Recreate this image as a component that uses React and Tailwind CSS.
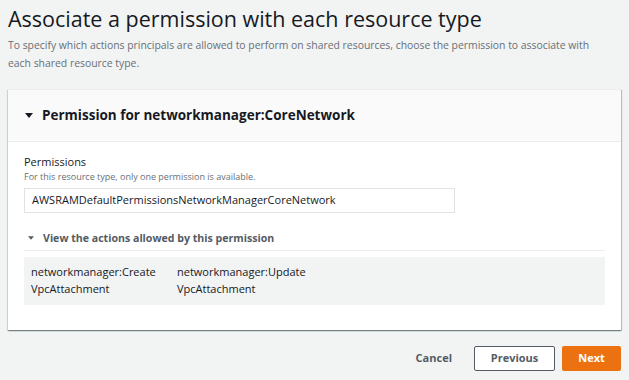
import React from 'react';

const font = { fontFamily: '"Open Sans", "Noto Sans", sans-serif' };

const Caret = ({ className }) => (
  <svg viewBox="0 0 10 6" className={className} fill="currentColor">
    <path d="M0 0 L10 0 L5 6 Z" />
  </svg>
);

const actions = [
  ['networkmanager:Create', 'VpcAttachment'],
  ['networkmanager:Update', 'VpcAttachment'],
];

export default function App() {
  return (
    <div className="w-[629px] h-[380px] bg-[#f2f3f3] px-2 overflow-hidden" style={font}>
      {/* heading */}
      <h1 className="pt-[5px] text-[21.5px] leading-[28px] text-[#16191f] whitespace-nowrap">
        Associate a permission with each resource type
      </h1>
      <p className="mt-[3px] text-[10.4px] leading-[18px] text-[#687078] whitespace-nowrap">
        To specify which actions principals are allowed to perform on shared resources, choose the permission to associate with
        <br />
        each shared resource type.
      </p>

      {/* card */}
      <div className="mt-[17px] h-[241px] bg-white border-t border-[#eaeded] shadow-[0_1px_1px_0_rgba(0,28,36,0.35),1px_1px_1px_0_rgba(0,28,36,0.2),-1px_1px_1px_0_rgba(0,28,36,0.1)]">
        <div className="h-[52px] bg-[#fafafa] border-b border-[#eaeded] flex items-center pl-[17px] gap-[9px]">
          <Caret className="w-[8px] h-[5px] text-[#16191f]" />
          <span className="text-[13.5px] font-bold text-[#16191f]">Permission for networkmanager:CoreNetwork</span>
        </div>

        <div className="px-4 pt-[12px]">
          <div className="text-[11px] leading-[16px] text-[#16191f]">Permissions</div>
          <div className="text-[9px] leading-[14px] text-[#687078]">
            For this resource type, only one permission is available.
          </div>
          <div className="mt-[4px] w-[431px] h-[25px] border border-[#dfe3e3] flex items-center pl-[7px] text-[11px] text-[#16191f]">
            AWSRAMDefaultPermissionsNetworkManagerCoreNetwork
          </div>

          <div className="mt-[17px] flex items-center gap-[9px] pl-[4px] pb-[4px] border-b border-[#eaeded]">
            <Caret className="w-[6px] h-[4px] text-[#545b64]" />
            <span className="text-[10.6px] leading-[16px] font-bold text-[#545b64]">
              View the actions allowed by this permission
            </span>
          </div>

          <div className="mt-[6px] h-[48px] bg-[#f2f3f3] flex gap-[22px] pl-[7px] pt-[6px] text-[11px] leading-[17px] text-[#16191f]">
            {actions.map(([a, b]) => (
              <div key={a} className="w-[124px]">
                <div>{a}</div>
                <div>{b}</div>
              </div>
            ))}
          </div>
        </div>
      </div>

      {/* footer buttons */}
      <div className="mt-[16px] flex justify-end items-center">
        <button className="mr-[22px] text-[11px] font-bold text-[#545b64]">Cancel</button>
        <button className="w-[81px] h-[25px] mr-[7px] border border-[#545b64] rounded-[2px] bg-white text-[11px] font-bold text-[#545b64]">
          Previous
        </button>
        <button className="w-[59px] h-[25px] rounded-[2px] bg-[#ec7211] text-[11px] font-bold text-white">
          Next
        </button>
      </div>
    </div>
  );
}
